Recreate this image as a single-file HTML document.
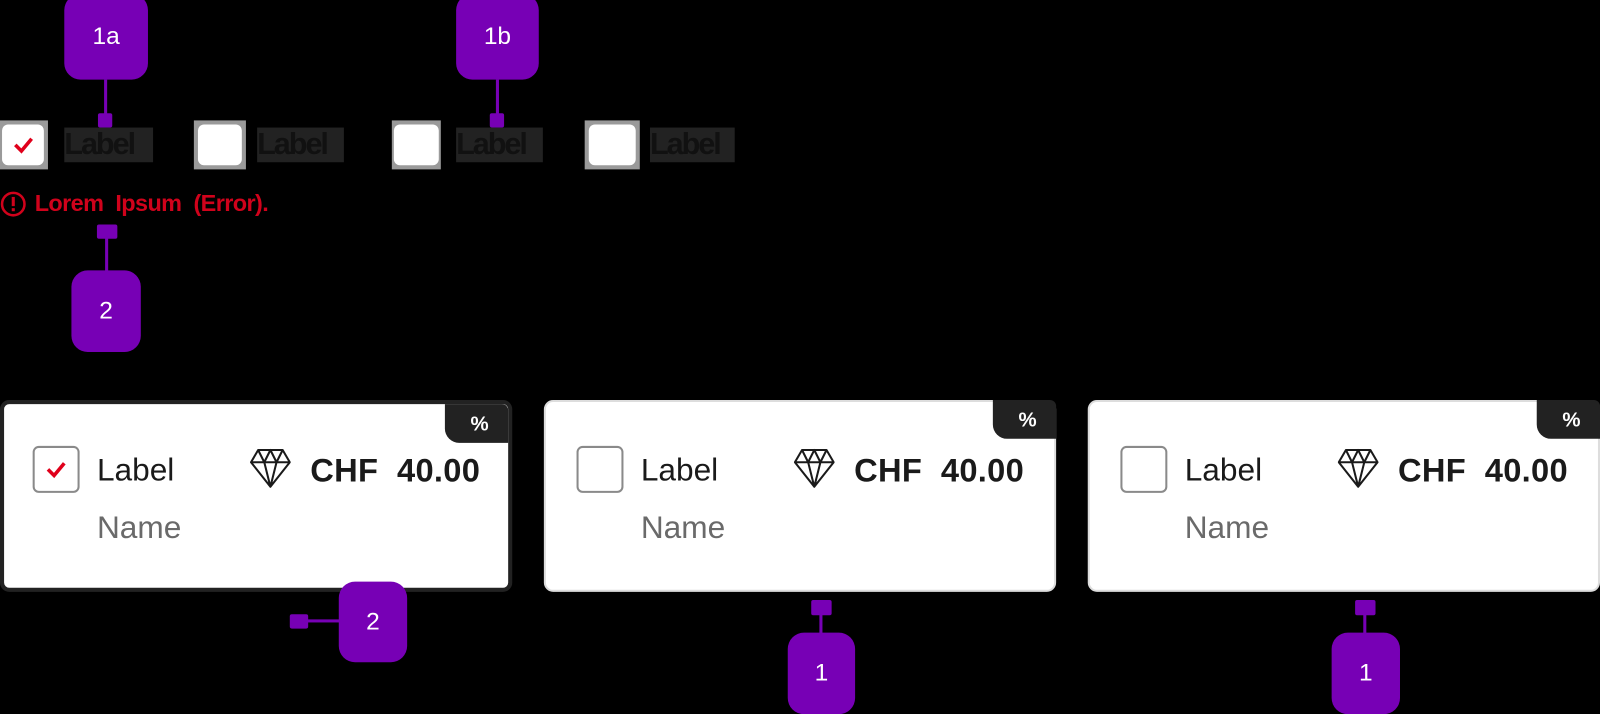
<!DOCTYPE html>
<html><head><meta charset="utf-8"><style>
html,body{margin:0;padding:0;background:#000;width:1600px;height:712px;overflow:hidden}
#s{position:absolute;left:0;top:0;width:1568px;height:698px;transform:scale(1.020408);transform-origin:0 0;font-family:"Liberation Sans",sans-serif}
.a{position:absolute}
.badge{position:absolute;background:#7700b5;color:#fff;font-size:24px;display:flex;align-items:center;justify-content:center;border-radius:16px}
.sq{position:absolute;background:#7700b5;border-radius:2px}
.ln{position:absolute;background:#7700b5}
.cbo{position:absolute;background:#9a9a9a;width:48px;height:48px}
.cbi{position:absolute;left:4px;top:4px;width:40px;height:40px;background:#fff;border-radius:6px}
.lb{position:absolute;background:#222;color:#111;font-weight:bold;font-size:30px;height:34px;line-height:34px;letter-spacing:-2px}
.card{position:absolute;top:392px;width:502px;height:188px;box-sizing:border-box;border-radius:9px;background:#fff}
.pct{position:absolute;right:0;top:0;width:62px;height:38px;background:#222;color:#fff;font-weight:bold;font-size:20px;border-bottom-left-radius:14px;border-top-right-radius:6px;text-align:center;line-height:40px;padding-left:6px;box-sizing:border-box}
.box{position:absolute;width:46px;height:46px;box-sizing:border-box;border:2px solid #8a8a8a;border-radius:6px;background:#fff}
.l1{position:absolute;font-size:31px;color:#1a1a1a}
.l2{position:absolute;font-size:31px;color:#6a6a6a}
.pr{position:absolute;font-size:32px;font-weight:bold;color:#1a1a1a;white-space:pre;letter-spacing:0.3px}
</style></head><body><div id="s">
<div class="badge" style="left:63px;top:-6px;width:82px;height:84px">1a</div>
<div class="ln" style="left:102px;top:78px;width:3px;height:36px"></div>
<div class="sq" style="left:96px;top:111px;width:14px;height:14px"></div>
<div class="badge" style="left:447px;top:-6px;width:81px;height:84px">1b</div>
<div class="ln" style="left:486px;top:78px;width:3px;height:36px"></div>
<div class="sq" style="left:480px;top:111px;width:14px;height:14px"></div>

<div class="cbo" style="left:0;top:118px;width:47px"><div class="cbi" style="left:2px;width:41px"></div>
<svg class="a" style="left:12px;top:14px" width="22" height="20" viewBox="0 0 22 20"><path d="M3 10 L9 16 L19 4" fill="none" stroke="#e0001b" stroke-width="3.5"/></svg></div>
<div class="lb" style="left:63px;top:125px;width:87px">Label</div>
<div class="cbo" style="left:190px;top:118px;width:51px"></div><div class="a" style="left:194px;top:122px;width:43px;height:40px;background:#fff;border-radius:6px"></div>
<div class="lb" style="left:252px;top:125px;width:85px">Label</div>
<div class="cbo" style="left:384px;top:118px;width:48px"></div><div class="a" style="left:386px;top:122px;width:44px;height:40px;background:#fff;border-radius:6px"></div>
<div class="lb" style="left:447px;top:125px;width:85px">Label</div>
<div class="cbo" style="left:573px;top:118px;width:54px"></div><div class="a" style="left:577px;top:122px;width:46px;height:40px;background:#fff;border-radius:6px"></div>
<div class="lb" style="left:637px;top:125px;width:83px">Label</div>

<svg class="a" style="left:0;top:187px" width="26" height="26" viewBox="0 0 26 26"><circle cx="13" cy="13" r="11" fill="none" stroke="#d0021b" stroke-width="2.5"/><rect x="11.5" y="6" width="3" height="9" fill="#d0021b"/><rect x="11.5" y="17" width="3" height="3" fill="#d0021b"/></svg>
<div class="a" style="left:34px;top:186px;font-size:23px;font-weight:bold;color:#d0021b;letter-spacing:-0.6px;word-spacing:6px">Lorem Ipsum (Error).</div>
<div class="sq" style="left:95px;top:220px;width:20px;height:14px"></div>
<div class="ln" style="left:103px;top:232px;width:3px;height:36px"></div>
<div class="badge" style="left:70px;top:265px;width:68px;height:80px">2</div>

<div class="card" style="left:0;border:4px solid #222">
<div class="pct">%</div>
<div class="box" style="left:28px;top:41px"><svg class="a" style="left:10px;top:11px" width="22" height="20" viewBox="0 0 22 20"><path d="M3 10 L9 16 L19 4" fill="none" stroke="#e0001b" stroke-width="3.5"/></svg></div>
<div class="l1" style="left:91px;top:47px">Label</div><div class="l2" style="left:91px;top:103px">Name</div>
<div class="pr" style="left:300px;top:47px">CHF  40.00</div>
</div>
<div class="card" style="left:533px;border:2px solid #ddd"><div class="pct" style="right:-2px;top:-2px">%</div>
<div class="box" style="left:30px;top:43px"></div><div class="l1" style="left:93px;top:49px">Label</div><div class="l2" style="left:93px;top:105px">Name</div><div class="pr" style="left:302px;top:49px">CHF  40.00</div></div>
<div class="card" style="left:1066px;border:2px solid #ddd"><div class="pct" style="right:-2px;top:-2px">%</div>
<div class="box" style="left:30px;top:43px"></div><div class="l1" style="left:93px;top:49px">Label</div><div class="l2" style="left:93px;top:105px">Name</div><div class="pr" style="left:302px;top:49px">CHF  40.00</div></div>

<svg class="a" style="left:245px;top:439px" width="40" height="40" viewBox="0 0 40 40"><g fill="none" stroke="#1a1a1a" stroke-width="2" stroke-linejoin="round"><path d="M8 2 H32 L39 14 L20 38 L1 14 Z M1 14 H39 M8 2 L14 14 L20 2 L26 14 L32 2 M14 14 L20 38 L26 14"/></g></svg>
<svg class="a" style="left:778px;top:439px" width="40" height="40" viewBox="0 0 40 40"><g fill="none" stroke="#1a1a1a" stroke-width="2" stroke-linejoin="round"><path d="M8 2 H32 L39 14 L20 38 L1 14 Z M1 14 H39 M8 2 L14 14 L20 2 L26 14 L32 2 M14 14 L20 38 L26 14"/></g></svg>
<svg class="a" style="left:1311px;top:439px" width="40" height="40" viewBox="0 0 40 40"><g fill="none" stroke="#1a1a1a" stroke-width="2" stroke-linejoin="round"><path d="M8 2 H32 L39 14 L20 38 L1 14 Z M1 14 H39 M8 2 L14 14 L20 2 L26 14 L32 2 M14 14 L20 38 L26 14"/></g></svg>

<div class="sq" style="left:284px;top:602px;width:18px;height:14px"></div>
<div class="ln" style="left:300px;top:607px;width:34px;height:3px"></div>
<div class="badge" style="left:332px;top:570px;width:67px;height:79px">2</div>
<div class="sq" style="left:795px;top:588px;width:20px;height:15px"></div>
<div class="ln" style="left:803px;top:602px;width:3px;height:20px"></div>
<div class="badge" style="left:772px;top:620px;width:66px;height:80px">1</div>
<div class="sq" style="left:1328px;top:588px;width:20px;height:15px"></div>
<div class="ln" style="left:1336px;top:602px;width:3px;height:20px"></div>
<div class="badge" style="left:1305px;top:620px;width:67px;height:80px">1</div>
</div></body></html>
